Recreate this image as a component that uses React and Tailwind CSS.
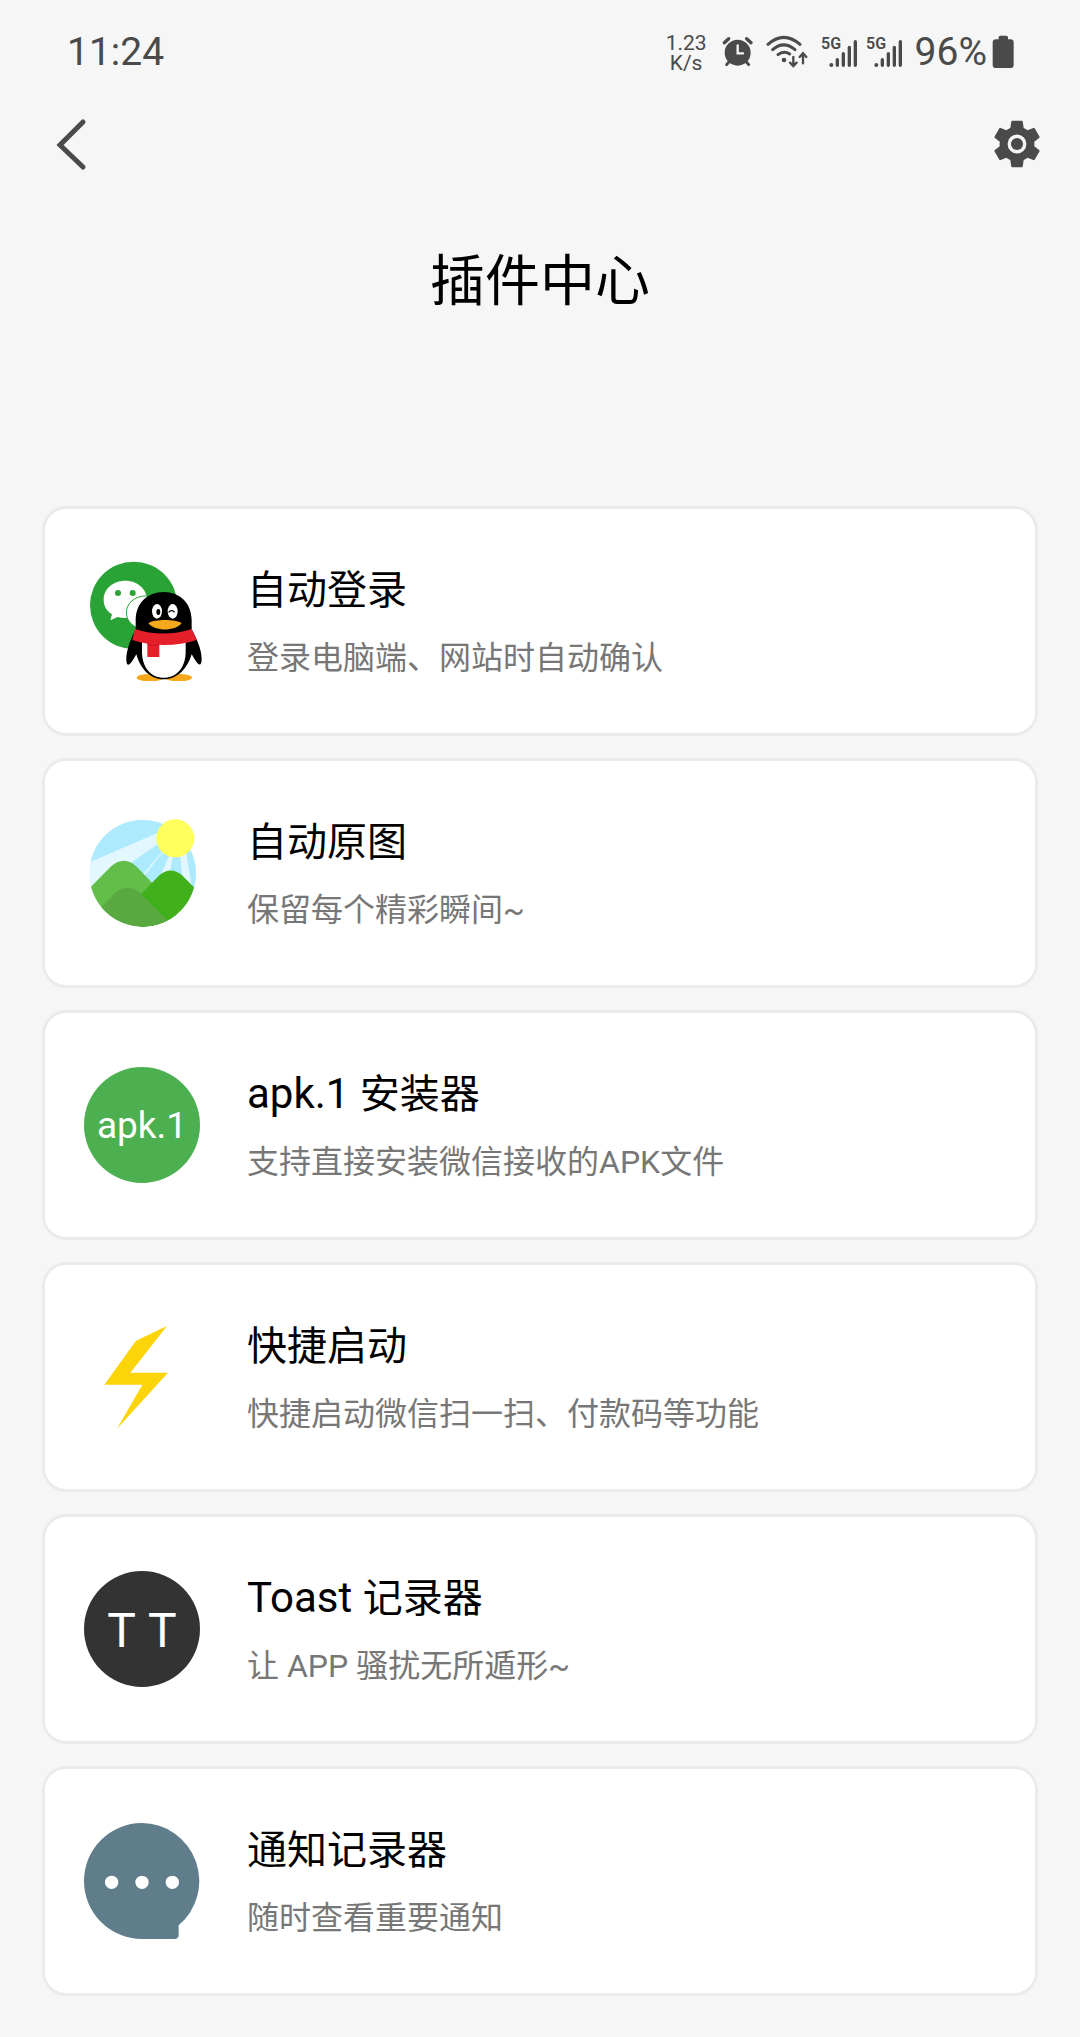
import React from 'react';

const GEAR_PATH = 'M19.14,12.94c0.04-0.3,0.06-0.61,0.06-0.94c0-0.32-0.02-0.64-0.07-0.94l2.03-1.58c0.18-0.14,0.23-0.41,0.12-0.61l-1.92-3.32c-0.12-0.22-0.37-0.29-0.59-0.22l-2.39,0.96c-0.5-0.38-1.03-0.7-1.62-0.94L14.4,2.81c-0.04-0.24-0.24-0.41-0.48-0.41h-3.84c-0.24,0-0.43,0.17-0.47,0.41L9.25,5.35C8.66,5.59,8.12,5.92,7.63,6.29L5.24,5.33c-0.22-0.08-0.47,0-0.59,0.22L2.74,8.87C2.62,9.08,2.66,9.34,2.86,9.48l2.03,1.58C4.84,11.36,4.8,11.69,4.8,12s0.02,0.64,0.07,0.94l-2.03,1.58c-0.18,0.14-0.23,0.41-0.12,0.61l1.92,3.32c0.12,0.22,0.37,0.29,0.59,0.22l2.39-0.96c0.5,0.38,1.03,0.7,1.62,0.94l0.36,2.54c0.05,0.24,0.24,0.41,0.48,0.41h3.84c0.24,0,0.44-0.17,0.47-0.41l0.36-2.54c0.59-0.24,1.13-0.56,1.62-0.94l2.39,0.96c0.22,0.08,0.47,0,0.59-0.22l1.92-3.32c0.12-0.22,0.07-0.47-0.12-0.61L19.14,12.94z M12,15.9a3.9,3.9,0,1,1,0-7.8a3.9,3.9,0,0,1,0,7.8z';

/* STATUS BAR ICONS */
const AlarmIcon = () => (
  <svg viewBox="243 36 93 120" className="w-[31px] h-10" fill="none" stroke="currentColor" strokeLinecap="round">
    <circle cx="290" cy="98" r="39" fill="currentColor" stroke="none" />
    <path d="M250 68l13-12M330 68l-13-12" strokeWidth="10" />
    <path d="M265 124l-8 10M315 124l8 10" strokeWidth="9" />
    <path d="M290 76v24h16" stroke="#f6f6f6" strokeWidth="7" />
  </svg>
);

const WifiIcon = () => (
  <svg viewBox="375 36 126 120" className="w-[42px] h-10" fill="none" stroke="currentColor" strokeWidth="9" strokeLinecap="round">
    <path d="M381 73Q428 31 477 73" />
    <path d="M395 89Q428 60 462 89" />
    <path d="M411 104Q428 91 446 102" />
    <circle cx="429" cy="120" r="7" fill="currentColor" stroke="none" />
    <path d="M457 111v26M447 128l10 10 10-10" strokeWidth="7" />
    <path d="M486 130v-29M476 111l10-11 10 11" strokeWidth="7" />
  </svg>
);

const SignalIcon = () => (
  <svg viewBox="543 36 111 120" className="w-[37px] h-10" fill="none" stroke="currentColor" strokeWidth="10" strokeLinecap="round">
    <text x="543" y="86" fontSize="48" fontWeight="600" fill="currentColor" stroke="none" className="font-['Roboto',sans-serif]">5G</text>
    <circle cx="574" cy="135" r="6" fill="currentColor" stroke="none" />
    <path d="M592 119v17M610 101v35M628 82v54M646 65v71" />
  </svg>
);

const BatteryIcon = () => (
  <svg viewBox="1054 36 66 120" className="w-[22px] h-10" fill="currentColor">
    <rect x="1074" y="47" width="28" height="20" rx="5" />
    <rect x="1056" y="58" width="63" height="86" rx="10" />
  </svg>
);

/* PLUGIN ICONS */
const LoginIcon = () => (
  <svg viewBox="36 63 360 360" className="size-full">
    <circle cx="191" cy="196" r="131" fill="#2aa336" />
    <path d="M166 122c-37 0-65 25-65 57 0 19 9 34 25 44l-5 18 22-10c8 2 15 3 23 3 37 0 65-24 65-55s-28-57-65-57z" fill="#fff" />
    <circle cx="144" cy="159" r="9" fill="#2aa336" />
    <circle cx="188" cy="159" r="9" fill="#2aa336" />
    <ellipse cx="226" cy="218" rx="57" ry="50" fill="#fff" stroke="#2aa336" strokeWidth="3" />
    <ellipse cx="240" cy="413" rx="40" ry="11" fill="#f5a81c" />
    <ellipse cx="326" cy="413" rx="40" ry="11" fill="#f5a81c" />
    <path d="M281 156c-50 0-83 34-84 84v28c-14 28-29 64-28 92 1 22 10 18 23-5l7-12c13 45 42 75 82 75s70-30 84-75l8 13c13 22 21 23 22 3 1-28-15-63-30-91v-28c-1-50-34-84-84-84z" fill="#000" />
    <path d="M216 300v35c0 48 27 78 65 78s66-30 66-78v-35z" fill="#fff" />
    <path d="M195 267c55 18 115 18 170 0l15 33c-62 20-132 20-193 0z" fill="#e5202b" />
    <path d="M232 308h36v43h-36z" fill="#e5202b" />
    <path d="M232 313c12 3 24 3 36 2" fill="none" stroke="#b5141f" strokeWidth="2" />
    <ellipse cx="261" cy="214" rx="15" ry="22" fill="#fff" />
    <ellipse cx="308" cy="214" rx="15" ry="22" fill="#fff" />
    <ellipse cx="265" cy="216" rx="6" ry="9" fill="#000" />
    <path d="M296 217c6-7 13-6 18 0" fill="none" stroke="#000" strokeWidth="4" />
    <path d="M235 250c16-13 83-13 100 0-20 25-80 25-100 0z" fill="#f5a81c" />
  </svg>
);

const PhotoIcon = () => (
  <svg viewBox="36 39 360 360" className="size-full">
    <defs>
      <clipPath id="photo-circle"><circle cx="218" cy="220" r="160" /></clipPath>
    </defs>
    <g clipPath="url(#photo-circle)">
      <rect x="50" y="50" width="340" height="340" fill="#e2f7ff" />
      <path d="M290 87L40 195V40h290z" fill="#aeeafd" />
      <path d="M262 133L170 198l42 34 66-80z" fill="#aeeafd" />
      <path d="M277 158L222 228l36 28 40-90z" fill="#aeeafd" />
      <path d="M309 165L296 240h42l-8-75z" fill="#aeeafd" />
      <path d="M348 155l18 110h30V140z" fill="#aeeafd" />
      <path d="M40 284l82-84c24-24 55-24 78 0l120 125v70H40z" fill="#63be49" />
      <path d="M210 286l58-60c22-19 46-19 68 0l60 60v110H210z" fill="#40b11b" />
      <path d="M60 356l78-79c24-18 48-18 70 0l90 90v40H60z" fill="#5aa840" />
    </g>
    <circle cx="316" cy="115" r="57" fill="#feff5c" />
  </svg>
);

const ApkIcon = () => (
  <div className="size-[116px] pt-[2px] rounded-full bg-[#4caf50] flex items-center justify-center text-white text-[37px]">apk.1</div>
);

const BoltIcon = () => (
  <svg viewBox="36 21 360 360" className="size-full">
    <path d="M291 48L198 92 103 224H217L141 356 294 188H181z" fill="#fcd40a" />
  </svg>
);

const ToastIcon = () => (
  <div className="size-[116px] pt-[3px] rounded-full bg-[#333333] flex items-center justify-center gap-3 text-white text-5xl">
    <span>T</span>
    <span>T</span>
  </div>
);

const NoticeIcon = () => (
  <svg viewBox="36 33 360 360" className="size-full">
    <path d="M216 39a174 174 0 0 1 110 307v28q0 13-13 13H216a174 174 0 0 1 0-348z" fill="#607d8b" />
    <circle cx="125" cy="217" r="20" fill="#fff" />
    <circle cx="216" cy="217" r="20" fill="#fff" />
    <circle cx="307" cy="217" r="20" fill="#fff" />
  </svg>
);

const PLUGINS = [
  { id: 'login', title: '自动登录', desc: '登录电脑端、网站时自动确认', Icon: LoginIcon },
  { id: 'photo', title: '自动原图', desc: '保留每个精彩瞬间~', Icon: PhotoIcon },
  { id: 'apk', latin: 'apk.1 ', title: '安装器', desc: '支持直接安装微信接收的APK文件', Icon: ApkIcon },
  { id: 'launch', title: '快捷启动', desc: '快捷启动微信扫一扫、付款码等功能', Icon: BoltIcon },
  { id: 'toast', latin: 'Toast ', title: '记录器', desc: '让 APP 骚扰无所遁形~', Icon: ToastIcon },
  { id: 'notice', title: '通知记录器', desc: '随时查看重要通知', Icon: NoticeIcon },
];

const StatusBar = () => (
  <div className="h-[104px] pl-[67px] pr-[66px] flex items-center justify-between text-[39px] text-[#4a4a4a]">
    <span>11:24</span>
    <div className="flex items-center">
      <div className="mr-[15px] pt-[2px] text-center text-[21px] leading-[20px]">1.23<br />K/s</div>
      <div className="flex items-center gap-[13px]">
        <AlarmIcon />
        <WifiIcon />
        <div className="flex gap-2">
          <SignalIcon />
          <SignalIcon />
        </div>
      </div>
      <span className="ml-3 mr-[5px]">96%</span>
      <BatteryIcon />
    </div>
  </div>
);

const PluginCard = ({ latin, title, desc, Icon }) => (
  <button type="button" className="w-full h-[230px] pl-[37px] pr-8 flex items-center gap-[45px] text-left bg-white border-[3px] border-[#ebebeb] rounded-3xl">
    <div className="size-[120px] shrink-0 flex items-center justify-center"><Icon /></div>
    <div className="min-w-0 pt-[2px] space-y-[15px]">
      <div className="text-[40px] leading-[56px] text-black">
        {latin && <span className="text-[42px] whitespace-pre">{latin}</span>}{title}
      </div>
      <div className="text-[32px] leading-[48px] text-[#777777]">{desc}</div>
    </div>
  </button>
);

const App = () => (
  <div className="min-h-screen pb-10 bg-[#f6f6f6] font-['Roboto','Noto_Sans_CJK_SC',sans-serif]" lang="zh-CN">
    <StatusBar />

    <header>
      <div className="h-20 pl-[50px] pr-[34px] flex items-center justify-between text-[#4a4a4a]">
        <button type="button" aria-label="返回">
          <svg viewBox="0 0 42 56" className="w-[42px] h-14" fill="none" stroke="currentColor" strokeWidth="5" strokeLinecap="round">
            <path d="M33 6L10 29 33 51" />
          </svg>
        </button>
        <button type="button" aria-label="设置">
          <svg viewBox="0 0 24 24" className="size-[58px]" fill="currentColor">
            <path d={GEAR_PATH} />
            <circle cx="12" cy="12" r="2.5" />
          </svg>
        </button>
      </div>
      <h1 className="pt-[57px] pb-[185px] text-center text-[55px] leading-[80px] text-black">插件中心</h1>
    </header>

    <main className="px-[42px]">
      <ul className="space-y-[22px]">
        {PLUGINS.map(p => (
          <li key={p.id}><PluginCard latin={p.latin} title={p.title} desc={p.desc} Icon={p.Icon} /></li>
        ))}
      </ul>
    </main>
  </div>
);

export default App;
